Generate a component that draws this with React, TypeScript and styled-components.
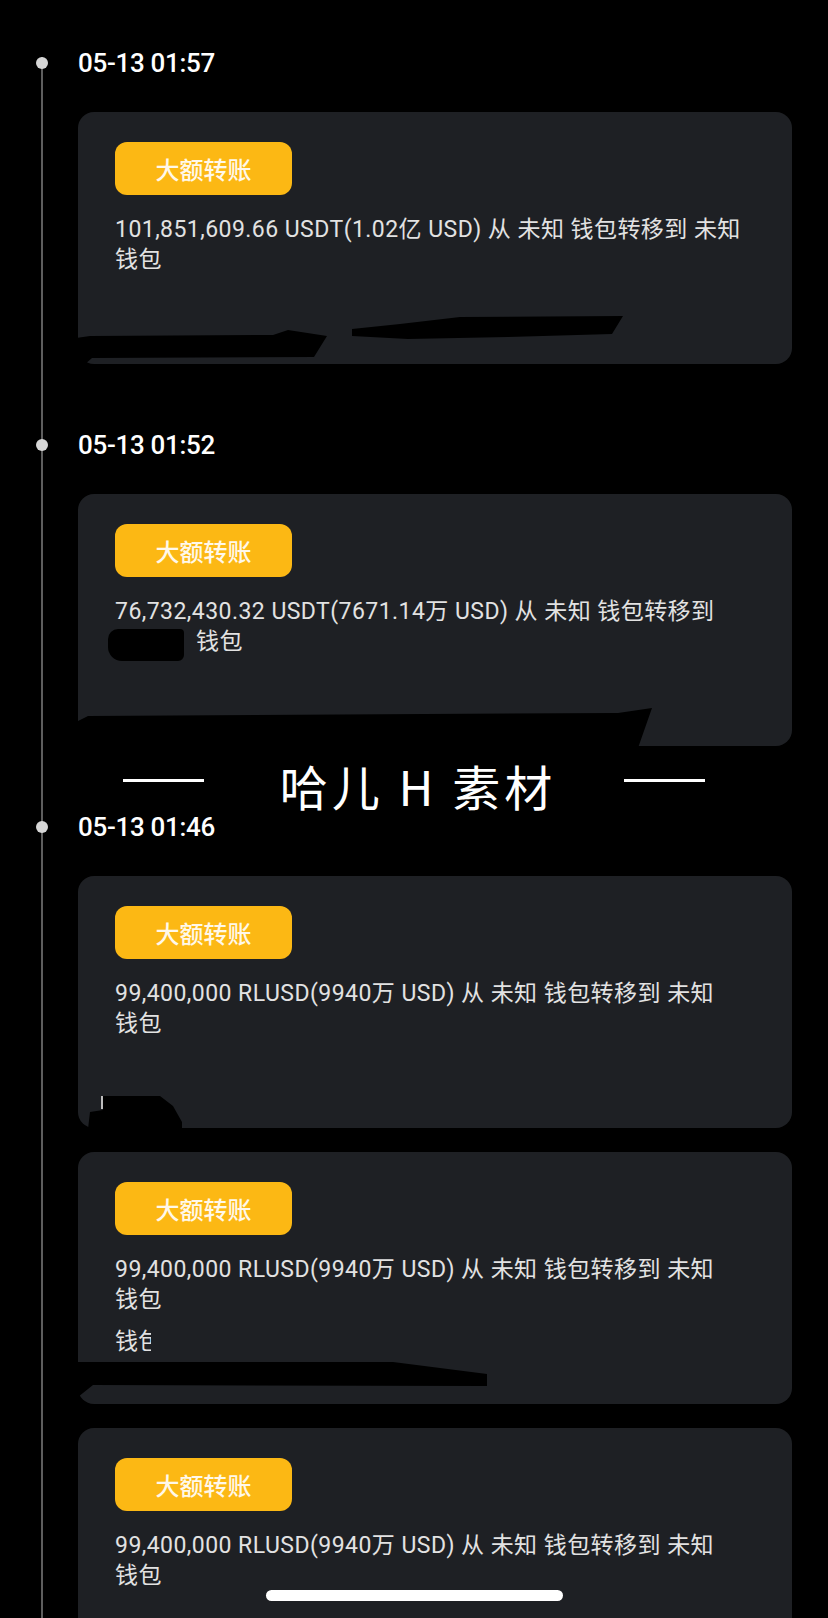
import React from "react";
import styled, { createGlobalStyle } from "styled-components";

const GlobalStyle = createGlobalStyle`
  html, body {
    margin: 0;
    padding: 0;
    background: #000;
  }
  body {
    font-family: Roboto, "Noto Sans CJK SC", sans-serif;
  }
`;

const Screen = styled.div`
  position: relative;
  width: 828px;
  height: 1618px;
  overflow: hidden;
  background: #000;
`;

const Timeline = styled.div`
  position: relative;
  display: flex;
  flex-direction: column;
  gap: 61px;
  padding: 43px 36px 0 0;
  &::before {
    content: "";
    position: absolute;
    left: 41px;
    top: 57px;
    bottom: 0;
    width: 2px;
    background: #5e5e5e;
  }
`;

const Group = styled.section`
  display: flex;
  flex-direction: column;
  gap: 29px;
`;

const Header = styled.div`
  display: flex;
  align-items: center;
  gap: 30px;
  height: 40px;
  padding-left: 36px;
`;

const Dot = styled.span`
  position: relative;
  width: 12px;
  height: 12px;
  border-radius: 50%;
  background: #d6d6d6;
`;

const Time = styled.span`
  font-family: Roboto, sans-serif;
  font-weight: 500;
  font-size: 26px;
  letter-spacing: -0.3px;
  color: #fff;
`;

const CardList = styled.div`
  display: flex;
  flex-direction: column;
  gap: 24px;
  margin-left: 78px;
`;

const Card = styled.div`
  position: relative;
  box-sizing: border-box;
  height: 252px;
  padding: 30px 37px 0 37px;
  background: #1e2024;
  border-radius: 16px;
`;

const Badge = styled.div`
  display: flex;
  align-items: center;
  justify-content: center;
  width: 177px;
  height: 53px;
  border-radius: 12px;
  background: #fcb814;
  color: #fff8ea;
  font-family: "Noto Sans CJK SC", sans-serif;
  font-weight: 500;
  font-size: 24px;
`;

const Desc = styled.div`
  margin-top: 20px;
  font-size: 23px;
  line-height: 30px;
  letter-spacing: 0.45px;
  color: #e2e2e2;
  word-break: keep-all;
`;

const Redacted = styled.span`
  display: inline-block;
  width: 76px;
  height: 32px;
  margin: 0 12px 0 -7px;
  vertical-align: -12px;
  background: #000;
  border-radius: 10px 4px 6px 14px;
`;

const Footer = styled.div`
  padding-top: 12px;
`;

const FooterText = styled.div<{ $clip: number }>`
  width: ${(p) => p.$clip}px;
  overflow: hidden;
  white-space: nowrap;
  font-size: 23px;
  line-height: 30px;
  color: #e2e2e2;
`;

const Scribble = styled.svg`
  position: absolute;
  left: 0;
  top: 0;
  width: 100%;
  height: 100%;
  overflow: visible;
  pointer-events: none;
`;

const Watermark = styled.div`
  position: absolute;
  top: 755px;
  left: 0;
  right: 0;
  height: 60px;
  display: flex;
  align-items: center;
  justify-content: center;
`;

const Dash = styled.span<{ $side: "left" | "right" }>`
  width: 81px;
  height: 3px;
  margin-bottom: 10px;
  margin-right: ${(p) => (p.$side === "left" ? "76px" : "0")};
  margin-left: ${(p) => (p.$side === "right" ? "68px" : "0")};
  background: #fff;
`;

const MarkText = styled.span`
  font-family: "Noto Sans CJK SC", sans-serif;
  font-weight: 400;
  font-size: 48px;
  line-height: 1;
  letter-spacing: 4px;
  color: #fff;
  white-space: pre;
`;

const HomeBar = styled.div`
  position: absolute;
  top: 1590px;
  left: 266px;
  width: 297px;
  height: 11px;
  border-radius: 6px;
  background: #fff;
`;

type Item = {
  amount: string;
  hiddenTarget?: boolean;
  footer?: { text: string; clip: number };
  blobs: string[];
  cursor?: boolean;
};

const groups: { time: string; items: Item[] }[] = [
  {
    time: "05-13 01:57",
    items: [
      {
        amount: "101,851,609.66 USDT(1.02亿 USD)",
        blobs: [
          "-2,226 12,224 195,223 210,218 249,224 236,245 14,246 6,253 -2,253",
          "274,217 322,212 382,205 545,204 534,222 430,225 330,227 274,224",
        ],
      },
    ],
  },
  {
    time: "05-13 01:52",
    items: [
      {
        amount: "76,732,430.32 USDT(7671.14万 USD)",
        hiddenTarget: true,
        blobs: ["-2,228 10,222 540,219 574,214 560,254 -2,254"],
      },
    ],
  },
  {
    time: "05-13 01:46",
    items: [
      {
        amount: "99,400,000 RLUSD(9940万 USD)",
        blobs: ["25,220 82,220 95,230 104,246 104,253 10,253 12,236 25,234"],
        cursor: true,
      },
      {
        amount: "99,400,000 RLUSD(9940万 USD)",
        footer: { text: "钱包", clip: 36 },
        blobs: ["-2,210 315,210 409,222 409,234 15,233 0,245 8,253 -2,253"],
      },
      {
        amount: "99,400,000 RLUSD(9940万 USD)",
        blobs: [],
      },
    ],
  },
];

function TransferCard({ item }: { item: Item }) {
  return (
    <Card>
      <Badge>大额转账</Badge>
      <Desc>
        {item.amount} 从 未知 钱包转移到{" "}
        {item.hiddenTarget ? <Redacted /> : "未知 "}
        钱包
      </Desc>
      {item.footer && (
        <Footer>
          <FooterText $clip={item.footer.clip}>{item.footer.text}</FooterText>
        </Footer>
      )}
      {(item.blobs.length > 0 || item.cursor) && (
        <Scribble viewBox="0 0 714 252" preserveAspectRatio="none">
          {item.blobs.map((pts, i) => (
            <polygon key={i} points={pts} fill="#000" />
          ))}
          {item.cursor && <rect x="23" y="220" width="2" height="13" fill="#bdbdbd" />}
        </Scribble>
      )}
    </Card>
  );
}

export default function App() {
  return (
    <Screen>
      <GlobalStyle />
      <Timeline>
        {groups.map((g) => (
          <Group key={g.time}>
            <Header>
              <Dot />
              <Time>{g.time}</Time>
            </Header>
            <CardList>
              {g.items.map((it, i) => (
                <TransferCard key={i} item={it} />
              ))}
            </CardList>
          </Group>
        ))}
      </Timeline>
      <Watermark>
        <Dash $side="left" />
        <MarkText>哈儿 H 素材</MarkText>
        <Dash $side="right" />
      </Watermark>
      <HomeBar />
    </Screen>
  );
}
